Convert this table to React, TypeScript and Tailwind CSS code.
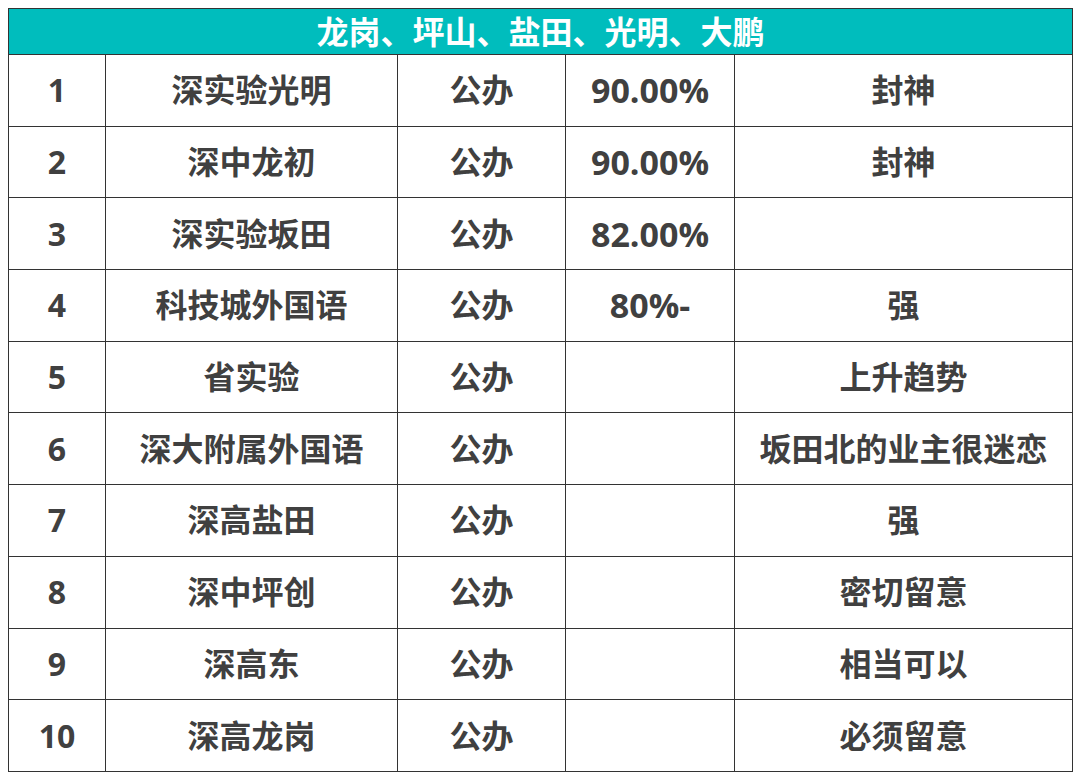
const rows: [string, string, string, string, string][] = [
  ['1', '深实验光明', '公办', '90.00%', '封神'],
  ['2', '深中龙初', '公办', '90.00%', '封神'],
  ['3', '深实验坂田', '公办', '82.00%', ''],
  ['4', '科技城外国语', '公办', '80%-', '强'],
  ['5', '省实验', '公办', '', '上升趋势'],
  ['6', '深大附属外国语', '公办', '', '坂田北的业主很迷恋'],
  ['7', '深高盐田', '公办', '', '强'],
  ['8', '深中坪创', '公办', '', '密切留意'],
  ['9', '深高东', '公办', '', '相当可以'],
  ['10', '深高龙岗', '公办', '', '必须留意'],
];

export default function App() {
  return (
    <div
      className="w-[1080px] h-[781px] bg-white pt-[8px] pl-[8px]"
      style={{ fontFamily: '"Open Sans", "Noto Sans CJK SC", sans-serif' }}
    >
      <table className="border-collapse table-fixed w-[1064px] text-[#404040] font-bold text-[32px]">
        <colgroup>
          <col className="w-[97px]" />
          <col className="w-[292px]" />
          <col className="w-[168px]" />
          <col className="w-[169px]" />
          <col className="w-[338px]" />
        </colgroup>
        <thead>
          <tr className="h-[46px]">
            <th
              colSpan={5}
              className="bg-[#00bdbd] text-white border border-[#333] text-center leading-none font-bold text-[32px]"
            >
              龙岗、坪山、盐田、光明、大鹏
            </th>
          </tr>
        </thead>
        <tbody>
          {rows.map((r) => (
            <tr key={r[0]} className="h-[71.7px]">
              {r.map((c, i) => (
                <td
                  key={i}
                  className={`border border-[#333] text-center leading-none p-0 ${i === 3 ? 'text-[34px]' : ''}`}
                >
                  {c}
                </td>
              ))}
            </tr>
          ))}
        </tbody>
      </table>
    </div>
  );
}
